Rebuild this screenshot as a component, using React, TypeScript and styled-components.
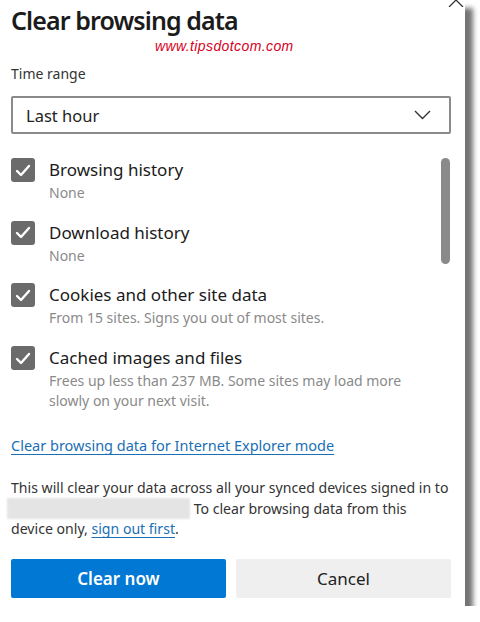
import React from "react";
import styled, { createGlobalStyle } from "styled-components";

const GlobalStyle = createGlobalStyle`
  body {
    margin: 0;
    background: #fff;
    font-family: "Noto Sans", "Open Sans", sans-serif;
    color: #1b1b1b;
  }
`;

const items = [
  { title: "Browsing history", desc: "None" },
  { title: "Download history", desc: "None" },
  {
    title: "Cookies and other site data",
    desc: "From 15 sites. Signs you out of most sites.",
  },
  {
    title: "Cached images and files",
    desc: "Frees up less than 237 MB. Some sites may load more slowly on your next visit.",
  },
];

const App = () => {
  return (
    <>
      <GlobalStyle />
      <Panel>
        <TopChevron viewBox="0 0 16 8">
          <path d="M1 8 L8 1 L15 8" fill="none" stroke="#333" strokeWidth="1.3" />
        </TopChevron>
        <Title>Clear browsing data</Title>
        <Watermark>www.tipsdotcom.com</Watermark>
        <Label>Time range</Label>
        <Select>
          <span>Last hour</span>
          <svg width="17" height="10" viewBox="0 0 17 10">
            <path d="M1 1 L8.5 8.5 L16 1" fill="none" stroke="#333" strokeWidth="1.4" />
          </svg>
        </Select>
        <ListArea>
          <List>
            {items.map((item) => (
              <Row key={item.title}>
                <Check>
                  <svg width="16" height="13" viewBox="0 0 16 13">
                    <path
                      d="M2 7 L6 11 L14 2"
                      fill="none"
                      stroke="#fff"
                      strokeWidth="2.4"
                      strokeLinecap="round"
                      strokeLinejoin="round"
                    />
                  </svg>
                </Check>
                <RowText>
                  <RowTitle>{item.title}</RowTitle>
                  <RowDesc>{item.desc}</RowDesc>
                </RowText>
              </Row>
            ))}
          </List>
          <Scrollbar />
        </ListArea>
        <IELink>Clear browsing data for Internet Explorer mode</IELink>
        <Note>
          This will clear your data across all your synced devices signed in to
          <br />
          <Redacted /> To clear browsing data from this
          <br />
          device only, <InlineLink>sign out first</InlineLink>.
        </Note>
        <Buttons>
          <Button primary>Clear now</Button>
          <Button>Cancel</Button>
        </Buttons>
      </Panel>
    </>
  );
};

export default App;

const Panel = styled.div`
  position: relative;
  width: 465px;
  height: 606px;
  box-sizing: border-box;
  padding: 0 14px 0 11px;
  background: #fff;
  box-shadow: 8px 8px 5px rgba(0, 0, 0, 0.55);
  display: flex;
  flex-direction: column;
`;

const TopChevron = styled.svg`
  position: absolute;
  top: -1px;
  right: 1px;
  width: 16px;
  height: 8px;
`;

const Title = styled.h1`
  margin: 0;
  padding-top: 3px;
  font-size: 25px;
  font-weight: 600;
  letter-spacing: -0.9px;
  line-height: 34px;
  color: #1b1b1b;
`;

const Watermark = styled.div`
  margin: 1px 0 0 144px;
  font-family: "Liberation Sans", sans-serif;
  font-style: italic;
  font-size: 14px;
  line-height: 16px;
  color: #d6001c;
  letter-spacing: 0.4px;
`;

const Label = styled.div`
  margin-top: 10px;
  font-size: 14px;
  line-height: 20px;
  color: #333;
`;

const Select = styled.div`
  margin-top: 12px;
  height: 38px;
  box-sizing: border-box;
  border: 2px solid #8a8a8a;
  border-radius: 2px;
  display: flex;
  align-items: center;
  justify-content: space-between;
  padding: 0 18px 0 13px;
  font-size: 16.5px;
  color: #222;
`;

const ListArea = styled.div`
  margin-top: 24px;
  display: flex;
  justify-content: space-between;
`;

const List = styled.div`
  display: flex;
  flex-direction: column;
  gap: 17.7px;
`;

const Row = styled.div`
  display: flex;
  gap: 14px;
`;

const Check = styled.div`
  flex: none;
  width: 24px;
  height: 24px;
  border-radius: 3px;
  background: #6b6b6b;
  display: flex;
  align-items: center;
  justify-content: center;
`;

const RowText = styled.div`
  display: flex;
  flex-direction: column;
  max-width: 360px;
`;

const RowTitle = styled.div`
  font-size: 17px;
  line-height: 26px;
  margin-top: -1px;
  color: #1b1b1b;
`;

const RowDesc = styled.div`
  font-size: 14px;
  line-height: 20px;
  color: #8a8a8a;
`;

const Scrollbar = styled.div`
  flex: none;
  width: 9px;
  height: 106px;
  margin-right: 1px;
  border-radius: 5px;
  background: #8a8a8a;
`;

const IELink = styled.a`
  margin-top: 24px;
  font-size: 14.5px;
  line-height: 20px;
  color: #1a6fb5;
  text-decoration: underline;
  text-underline-offset: 3px;
  align-self: flex-start;
`;

const Note = styled.p`
  margin: 23px 0 0;
  font-size: 14.1px;
  line-height: 20px;
  color: #333;
  white-space: nowrap;
`;

const Redacted = styled.span`
  display: inline-block;
  width: 183px;
  height: 21px;
  margin-left: -4px;
  vertical-align: -5px;
  background: #e4e4e4;
  filter: blur(1px);
`;

const InlineLink = styled.a`
  color: #1a6fb5;
  text-decoration: underline;
  text-underline-offset: 3px;
`;

const Buttons = styled.div`
  margin-top: 20px;
  display: grid;
  grid-template-columns: 1fr 1fr;
  gap: 10px;
  width: 440px;
`;

const Button = styled.button<{ primary?: boolean }>`
  height: 39px;
  border: none;
  border-radius: 2px;
  font-family: inherit;
  font-size: 17px;
  font-weight: ${(p) => (p.primary ? 600 : 400)};
  background: ${(p) => (p.primary ? "#0078d4" : "#efefef")};
  color: ${(p) => (p.primary ? "#fff" : "#222")};
`;
